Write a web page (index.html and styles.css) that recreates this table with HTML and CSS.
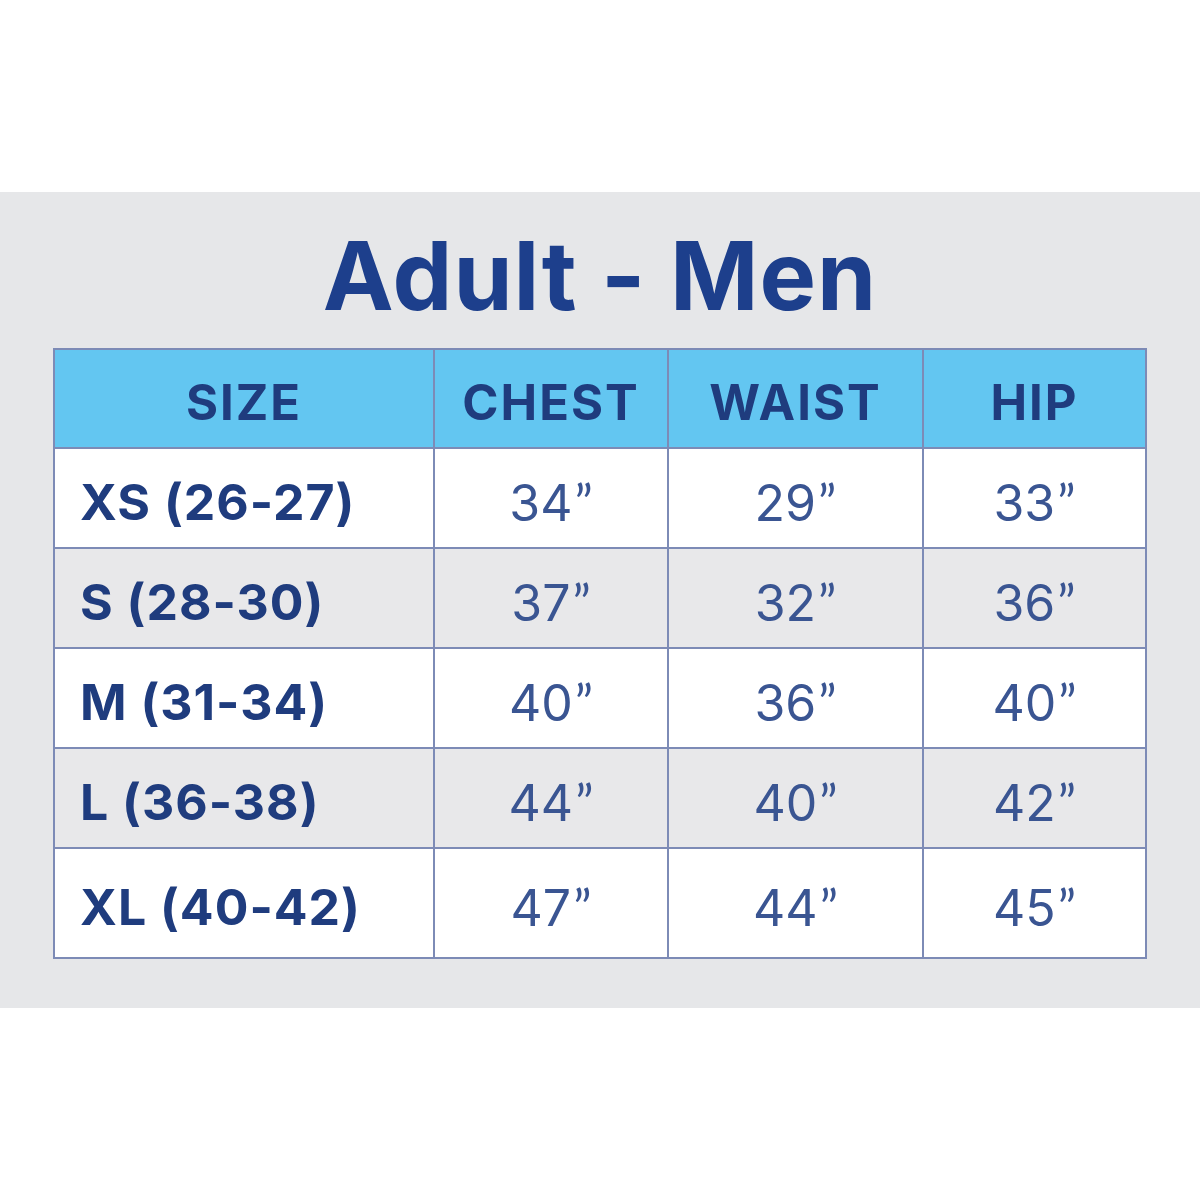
FILE: index.html
```html
<!DOCTYPE html>
<html>
<head>
<meta charset="utf-8">
<link rel="stylesheet" href="styles.css">
</head>
<body>
<div class="top"></div>
<section class="panel">
  <h1 class="title">Adult - Men</h1>
  <table class="chart">
    <colgroup>
      <col class="c1"><col class="c2"><col class="c3"><col class="c4">
    </colgroup>
    <thead>
      <tr><th>SIZE</th><th>CHEST</th><th>WAIST</th><th>HIP</th></tr>
    </thead>
    <tbody>
      <tr><td class="sz">XS (26-27)</td><td>34<span class="q">”</span></td><td>29<span class="q">”</span></td><td>33<span class="q">”</span></td></tr>
      <tr class="alt"><td class="sz">S (28-30)</td><td>37<span class="q">”</span></td><td>32<span class="q">”</span></td><td>36<span class="q">”</span></td></tr>
      <tr><td class="sz">M (31-34)</td><td>40<span class="q">”</span></td><td>36<span class="q">”</span></td><td>40<span class="q">”</span></td></tr>
      <tr class="alt"><td class="sz">L (36-38)</td><td>44<span class="q">”</span></td><td>40<span class="q">”</span></td><td>42<span class="q">”</span></td></tr>
      <tr class="last"><td class="sz">XL (40-42)</td><td>47<span class="q">”</span></td><td>44<span class="q">”</span></td><td>45<span class="q">”</span></td></tr>
    </tbody>
  </table>
</section>
</body>
</html>
```
FILE: styles.css
```css
html, body {
  margin: 0;
  padding: 0;
  background: #ffffff;
}
body {
  width: 1200px;
  height: 1200px;
  font-family: "Inter", "Liberation Sans", sans-serif;
}
.top {
  height: 192px;
}
.panel {
  background: #e6e7e9;
  height: 816px;
  box-sizing: border-box;
  padding-top: 28px;
  padding-left: 53px;
}
.title {
  margin: 0 0 0 -53px;
  text-align: center;
  font-size: 95px;
  line-height: 112px;
  font-weight: 700;
  color: #1d3f8c;
  letter-spacing: 1px;
}
.chart {
  margin-top: 16px;
  border-collapse: collapse;
  width: 1092px;
  table-layout: fixed;
  border: 2px solid #7d8bb6;
}
.c1 { width: 380px; }
.c2 { width: 234px; }
.c3 { width: 255px; }
.c4 { width: 223px; }
.chart th, .chart td {
  border: 2px solid #7d8bb6;
  padding: 8px 0 0 0;
  text-align: center;
}
.chart th {
  background: #63c6f1;
  height: 89px;
  font-size: 49px;
  font-weight: 700;
  color: #1f3c7e;
  letter-spacing: 2px;
}
.chart td {
  height: 90px;
  background: #ffffff;
  font-size: 50px;
  font-weight: 400;
  color: #3a5592;
}
.chart tr.alt td {
  background: #e8e8ea;
}
.chart tr.last td {
  height: 100px;
}
.chart td.sz {
  text-align: left;
  padding-left: 25px;
  font-weight: 700;
  color: #1f3c7e;
  letter-spacing: 1px;
}
.q {
  font-family: "Lato", "Open Sans", sans-serif;
  margin-left: 2px;
}
```
